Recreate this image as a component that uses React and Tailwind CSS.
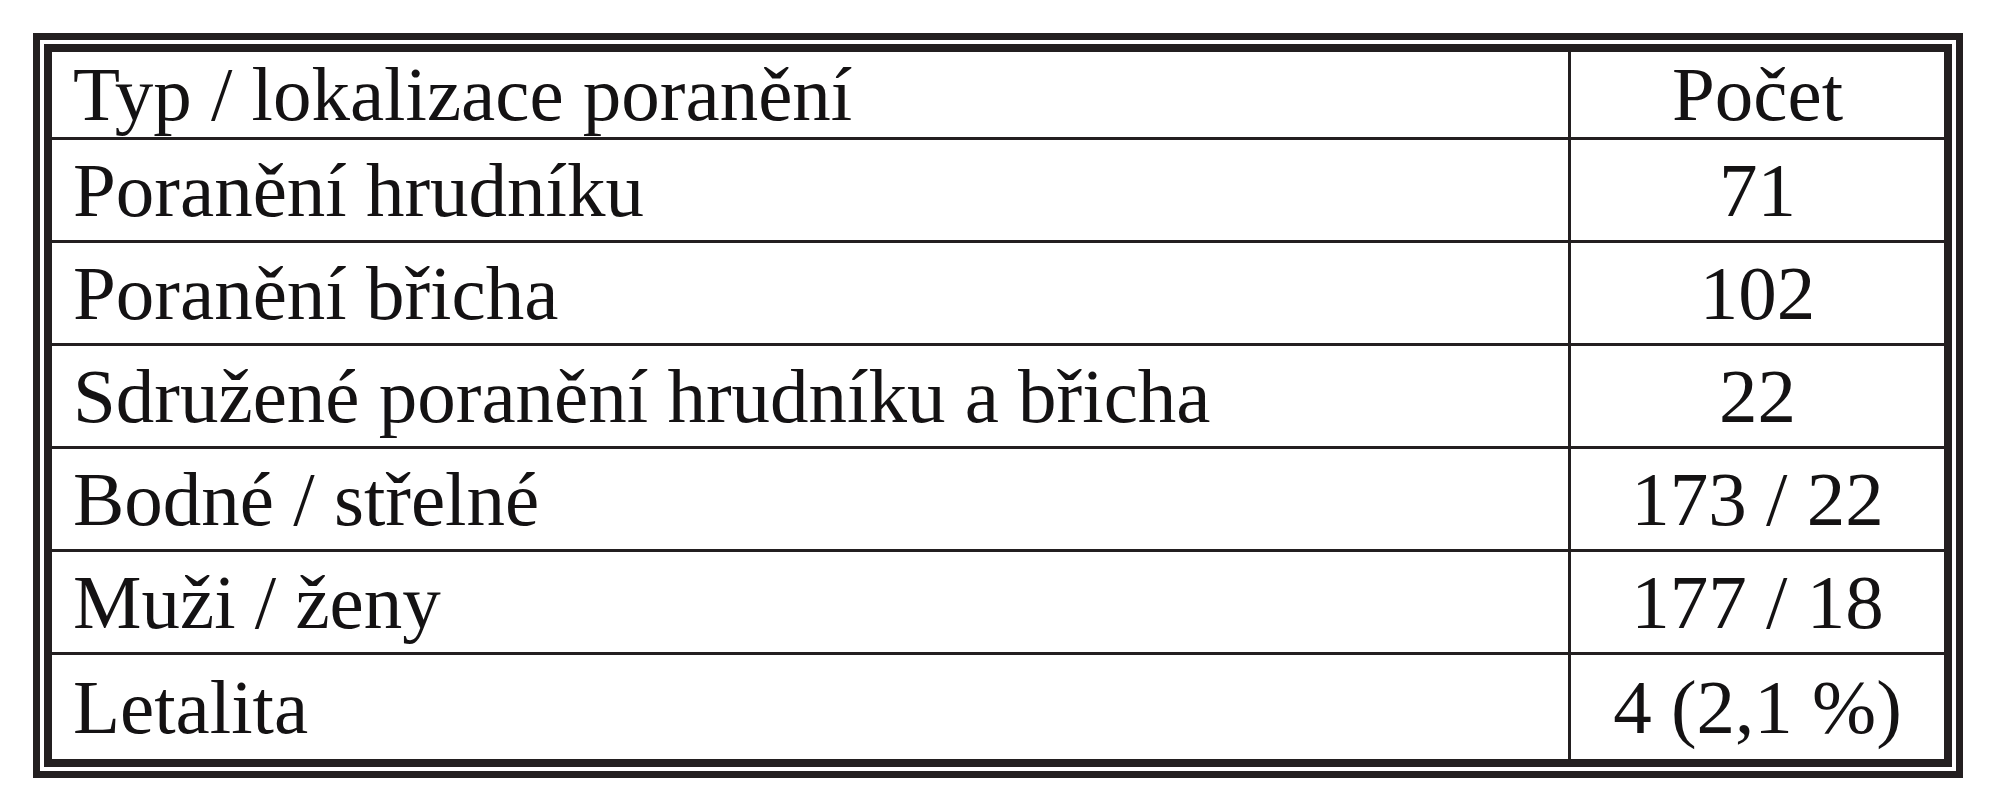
const rows = [
  ["Poranění hrudníku", "71"],
  ["Poranění břicha", "102"],
  ["Sdružené poranění hrudníku a břicha", "22"],
  ["Bodné / střelné", "173 / 22"],
  ["Muži / ženy", "177 / 18"],
  ["Letalita", "4 (2,1 %)"],
];

const Row = ({ label, value, height, last }) => (
  <div
    className={`flex ${height} ${last ? "" : "border-b-[3px] border-[#231f20]"}`}
  >
    <div className="flex w-[1519px] items-center border-r-[3px] border-[#231f20] pl-[21px]">
      {label}
    </div>
    <div className="flex flex-1 items-center justify-center">{value}</div>
  </div>
);

export default function App() {
  return (
    <div className="min-h-[800px] w-[1989px] bg-white pt-[33px] pl-[33px]">
      <div className="w-[1930px] h-[745px] border-[7px] border-[#231f20] bg-white p-[4px]">
        <div
          className="flex h-full flex-col border-[8px] border-[#231f20] text-[77px] leading-none text-[#141213]"
          style={{ fontFamily: '"Liberation Serif", "Times New Roman", serif' }}
        >
          <Row label="Typ / lokalizace poranění" value="Počet" height="h-[88px]" />
          {rows.map(([label, value], i) => (
            <Row
              key={label}
              label={label}
              value={value}
              height={i === rows.length - 1 ? "flex-1" : "h-[103px]"}
              last={i === rows.length - 1}
            />
          ))}
        </div>
      </div>
    </div>
  );
}
